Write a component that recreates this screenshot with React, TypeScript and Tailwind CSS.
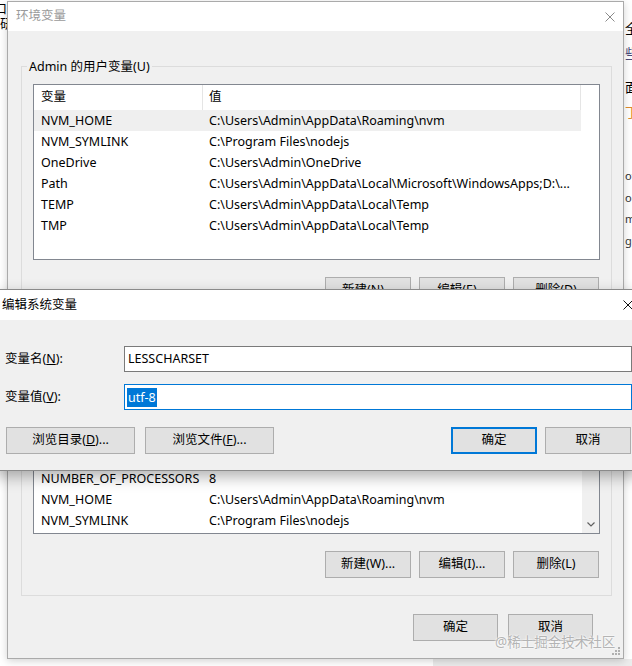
import type { ReactNode } from "react";

const userVars = [
  { name: "NVM_HOME", value: "C:\\Users\\Admin\\AppData\\Roaming\\nvm", selected: true },
  { name: "NVM_SYMLINK", value: "C:\\Program Files\\nodejs" },
  { name: "OneDrive", value: "C:\\Users\\Admin\\OneDrive" },
  { name: "Path", value: "C:\\Users\\Admin\\AppData\\Local\\Microsoft\\WindowsApps;D:\\..." },
  { name: "TEMP", value: "C:\\Users\\Admin\\AppData\\Local\\Temp" },
  { name: "TMP", value: "C:\\Users\\Admin\\AppData\\Local\\Temp" },
];

const systemVars = [
  { name: "ComSpec", value: "C:\\Windows\\system32\\cmd.exe" },
  { name: "DriverData", value: "C:\\Windows\\System32\\Drivers\\DriverData" },
  { name: "JAVA_HOME", value: "C:\\Program Files\\Java\\jdk1.8.0_201" },
  { name: "LESSCHARSET", value: "utf-8" },
  { name: "NUMBER_OF_PROCESSORS", value: "8" },
  { name: "NVM_HOME", value: "C:\\Users\\Admin\\AppData\\Roaming\\nvm" },
  { name: "NVM_SYMLINK", value: "C:\\Program Files\\nodejs" },
];

function CloseIcon({ color }: { color: string }) {
  return (
    <svg width="10" height="10" viewBox="0 0 10 10" className="shrink-0">
      <path d="M0.5 0.5 L9.5 9.5 M9.5 0.5 L0.5 9.5" stroke={color} strokeWidth="1" fill="none" />
    </svg>
  );
}

function Row({ name, value, selected }: { name: string; value: string; selected?: boolean }) {
  return (
    <div className={`flex h-[21px] w-[547px] shrink-0 items-center pt-[1px] ${selected ? "bg-[#efefef]" : ""}`}>
      <div className="w-[169px] shrink-0 whitespace-nowrap pl-[7px]">{name}</div>
      <div className="flex-1 overflow-hidden whitespace-nowrap pl-[6px]">{value}</div>
    </div>
  );
}

function Header() {
  return (
    <div className="flex h-[25px] shrink-0 items-center">
      <div className="flex h-full w-[169px] items-center border-r border-[#e5e5e5] pl-[7px]">变量</div>
      <div className="flex h-full w-[378px] items-center border-r border-[#e5e5e5] pl-[6px]">值</div>
    </div>
  );
}

function Group({ label, children }: { label: string; children: ReactNode }) {
  return (
    <div className="relative border border-[#dcdcdc] px-[11px] pb-[17px] pt-[17px]">
      <span className="absolute -top-[9px] left-[5px] bg-[#f0f0f0] px-[2px] leading-[17px]">{label}</span>
      {children}
    </div>
  );
}

function Btn({ children, w = "w-[86px]" }: { children: ReactNode; w?: string }) {
  return (
    <div className={`flex h-[27px] ${w} items-center justify-center border border-[#adadad] bg-[#e1e1e1]`}>
      {children}
    </div>
  );
}

export default function App() {
  return (
    <div className="relative h-[666px] w-[632px] overflow-hidden bg-white font-['Noto_Sans','Noto_Sans_CJK_SC',sans-serif] text-[12.5px] text-black">
      {/* desktop behind the windows */}
      <div className="absolute left-[-6px] top-[1px] text-[13px] leading-[15px]">口</div>
      <div className="absolute left-[0px] top-[16px] text-[13px] leading-[15px]">研</div>
      <div className="absolute left-[625px] top-[21px] flex flex-col text-[13px] leading-[15px]">
        <span className="h-[25px]">全</span>
        <span className="h-[34px] text-[#4b4b7a]">些</span>
        <span className="h-[25px]">面</span>
        <span className="text-[#e08a2c]">丁</span>
      </div>
      <div className="absolute left-[625px] top-[165px] flex flex-col text-[11px] leading-[21.5px] text-[#333]">
        <span>of</span>
        <span>oc</span>
        <span>mr</span>
        <span>go</span>
      </div>
      <div className="absolute bottom-0 left-[433px] h-[7px] w-[199px] bg-[#ececec]" />

      {/* 环境变量 */}
      <div className="absolute left-[7px] top-[1px] flex h-[658px] w-[617px] flex-col border border-[#aaaaaa] bg-[#f0f0f0] shadow-[0_2px_8px_rgba(0,0,0,0.18)]">
        <div className="flex h-[29px] shrink-0 items-center justify-between bg-white pl-[8px] pr-[8px] text-[#9a9a9a]">
          <span>环境变量</span>
          <CloseIcon color="#8a8a8a" />
        </div>
        <div className="flex flex-1 flex-col pl-[13px] pr-[11px] pt-[35px]">
          <Group label="Admin 的用户变量(U)">
            <div className="flex h-[176px] flex-col border border-[#828790] bg-white">
              <Header />
              {userVars.map((v) => (
                <Row key={v.name} {...v} />
              ))}
            </div>
            <div className="mr-[1px] mt-[17px] flex justify-end gap-[8px]">
              <Btn>新建(N)...</Btn>
              <Btn>编辑(E)...</Btn>
              <Btn>删除(D)</Btn>
            </div>
          </Group>
          <div className="mt-[14px]">
            <Group label="系统变量(S)">
              <div className="flex h-[180px] border border-[#828790] bg-white">
                <div className="flex w-[548px] flex-col">
                  <Header />
                  <div className="flex flex-1 flex-col justify-end overflow-hidden pb-[2px]">
                    {systemVars.map((v) => (
                      <Row key={v.name} {...v} />
                    ))}
                  </div>
                </div>
                <div className="flex w-[17px] flex-col justify-end bg-[#f0f0f0]">
                  <div className="flex h-[17px] items-center justify-center">
                    <svg width="8" height="5" viewBox="0 0 8 5">
                      <path d="M0.5 0.5 L4 4 L7.5 0.5" stroke="#606060" strokeWidth="1.2" fill="none" />
                    </svg>
                  </div>
                </div>
              </div>
              <div className="mr-[1px] mt-[17px] flex justify-end gap-[8px]">
                <Btn>新建(W)...</Btn>
                <Btn>编辑(I)...</Btn>
                <Btn>删除(L)</Btn>
              </div>
            </Group>
          </div>
          <div className="mt-[18px] flex justify-end gap-[10px] pr-[19px]">
            <Btn w="w-[85px]">确定</Btn>
            <Btn w="w-[85px]">取消</Btn>
          </div>
        </div>
        <svg width="8" height="8" viewBox="0 0 8 8" className="absolute bottom-[3px] right-[3px]">
          <rect x="6" y="0" width="2" height="2" fill="#b0b0b0" />
          <rect x="3" y="3" width="2" height="2" fill="#b0b0b0" />
          <rect x="6" y="3" width="2" height="2" fill="#b0b0b0" />
          <rect x="0" y="6" width="2" height="2" fill="#b0b0b0" />
          <rect x="3" y="6" width="2" height="2" fill="#b0b0b0" />
          <rect x="6" y="6" width="2" height="2" fill="#b0b0b0" />
        </svg>
      </div>

      {/* 编辑系统变量 */}
      <div className="absolute left-[-5px] top-[289px] w-[646px] border border-[#8a8a8a] bg-[#f0f0f0] shadow-[0_6px_14px_rgba(0,0,0,0.3)]">
        <div className="flex h-[30px] items-center justify-between bg-white pl-[6px] pr-[7px]">
          <span>编辑系统变量</span>
          <CloseIcon color="#111" />
        </div>
        <div className="pb-[16px] pl-[9px] pr-[8px] pt-[26px]">
          <div className="flex items-center">
            <div className="w-[119px] shrink-0">
              变量名(<span className="underline">N</span>):
            </div>
            <div className="flex h-[26px] flex-1 items-center border border-[#7a7a7a] bg-white pl-[3px]">LESSCHARSET</div>
          </div>
          <div className="mt-[12px] flex items-center">
            <div className="w-[119px] shrink-0">
              变量值(<span className="underline">V</span>):
            </div>
            <div className="flex h-[26px] flex-1 items-center border border-[#0078d7] bg-white pl-[2px]">
              <span className="bg-[#0078d7] px-[1px] leading-[19px] text-white">utf-8</span>
            </div>
          </div>
          <div className="mt-[17px] flex items-center justify-between pl-[1px] pr-[1px]">
            <div className="flex gap-[10px]">
              <Btn w="w-[129px]">
                浏览目录(<span className="underline">D</span>)...
              </Btn>
              <Btn w="w-[129px]">
                浏览文件(<span className="underline">F</span>)...
              </Btn>
            </div>
            <div className="flex gap-[8px]">
              <div className="flex h-[27px] w-[86px] items-center justify-center border-2 border-[#0078d7] bg-[#e1e1e1]">确定</div>
              <Btn>取消</Btn>
            </div>
          </div>
        </div>
      </div>

      {/* watermark */}
      <div className="absolute left-[495px] top-[633px] text-[13.5px] leading-[18px] text-[#b4b4b4] [text-shadow:0_0_2px_#fff,0_0_2px_#fff]">
        @稀土掘金技术社区
      </div>
    </div>
  );
}
